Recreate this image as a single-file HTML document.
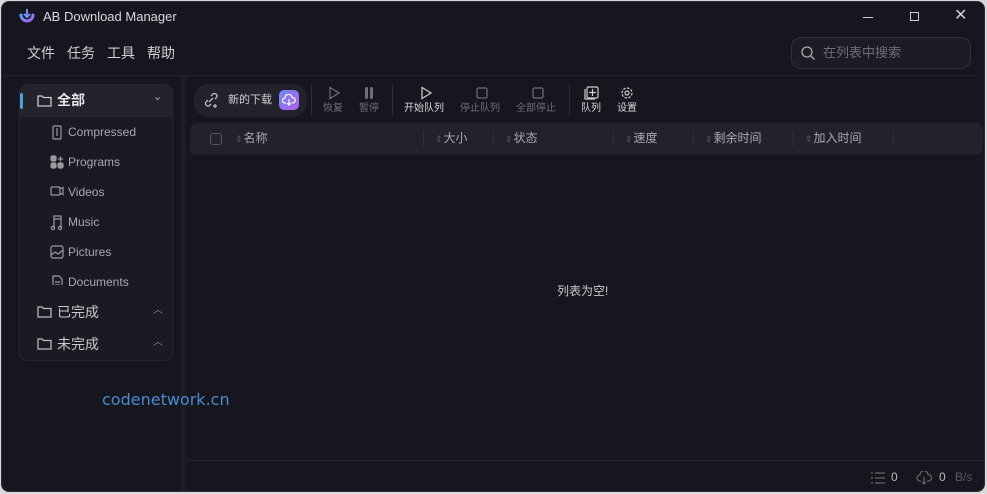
<!DOCTYPE html>
<html><head><meta charset="utf-8"><style>
*{margin:0;padding:0;box-sizing:border-box}
body{width:987px;height:494px;background:#d9d9d9;font-family:"Liberation Sans","Noto Sans CJK SC",sans-serif;overflow:hidden;position:relative}
.win{position:absolute;left:1px;top:1px;width:984px;height:491px;background:#16171e;border-radius:8px;border:1px solid #2a2b33;overflow:hidden}
.a{position:absolute;line-height:1.2}
.t{color:#d8d8dc;font-size:13px;white-space:nowrap}
.m{color:#d0d0d4;font-size:14px}
.side{left:17px;top:82px;width:154px;height:277px;background:#1a1b22;border:1px solid #26272f;border-radius:8px}
.si{color:#a8a8ae;font-size:12px}
svg{position:absolute}
.tb{font-size:10px;color:#6e6f76;text-align:center;white-space:nowrap}
.th{color:#a9a9b0;font-size:12px}
.ar{color:#55565d;font-size:9px;margin-right:1px}
.sep{width:1px;height:16px;background:#2f3038}
</style></head><body>
<div class="win">
<svg style="left:16px;top:6px" width="18" height="18" viewBox="0 0 18 18"><defs><linearGradient id="g" x1="0" y1="0" x2="1" y2="1"><stop offset="0" stop-color="#4aa8ff"/><stop offset="1" stop-color="#b05cf5"/></linearGradient></defs><path d="M3 7a6 6 0 1 0 12 0" stroke="url(#g)" stroke-width="3" fill="none" stroke-linecap="round"/><path d="M9 1v8M6 6l3 3 3-3" stroke="#7d8dff" stroke-width="2" fill="none"/></svg>
<div class="a t" style="left:41px;top:7px">AB Download Manager</div>
<div class="a" style="left:861px;top:15px;width:10px;height:1px;background:#ccc"></div>
<div class="a" style="left:908px;top:10px;width:9px;height:9px;border:1px solid #ccc"></div>
<div class="a" style="left:952px;top:4px;color:#ccc;font-size:16px">✕</div>
<div class="a m" style="left:25px;top:43px">文件</div>
<div class="a m" style="left:65px;top:43px">任务</div>
<div class="a m" style="left:105px;top:43px">工具</div>
<div class="a m" style="left:145px;top:43px">帮助</div>
<div class="a" style="left:789px;top:35px;width:180px;height:32px;border:1px solid #2e2f37;border-radius:10px;background:#1c1d24"></div>
<svg style="left:798px;top:43px" width="16" height="16" viewBox="0 0 16 16"><circle cx="7" cy="7" r="5" stroke="#aaa" stroke-width="1.3" fill="none"/><path d="M11 11l3.5 3.5" stroke="#aaa" stroke-width="1.3"/></svg>
<div class="a" style="left:821px;top:43px;color:#6d6e75;font-size:13px">在列表中搜索</div>
<div class="a" style="left:0;top:73px;width:975px;height:1px;background:#24252c"></div>
<div class="a" style="left:179px;top:74px;width:5px;height:420px;background:#1c1d24"></div>
<div class="a side"></div>
<div class="a" style="left:18px;top:83px;width:152px;height:32px;background:#22232b;border-radius:8px 8px 0 0"></div>
<div class="a" style="left:18px;top:91px;width:3px;height:16px;background:#4b9fd8;border-radius:2px"></div>
<svg style="left:35px;top:92px" width="15" height="13" viewBox="0 0 15 13"><path d="M1 2h4l1.5 1.5H14V12H1z" stroke="#ccc" stroke-width="1.3" fill="none"/></svg>
<div class="a" style="left:55px;top:90px;color:#e6e6ea;font-size:14px;font-weight:bold">全部</div>
<div class="a" style="left:151px;top:89px;color:#aaa;font-size:11px">⌄</div>
<div class="a si" style="left:66px;top:123px">Compressed</div>
<div class="a si" style="left:66px;top:153px">Programs</div>
<div class="a si" style="left:66px;top:183px">Videos</div>
<div class="a si" style="left:66px;top:213px">Music</div>
<div class="a si" style="left:66px;top:243px">Pictures</div>
<div class="a si" style="left:66px;top:273px">Documents</div>
<svg style="left:48px;top:123px" width="14" height="160" viewBox="0 0 14 160" fill="none" stroke="#9a9aa0" stroke-width="1.2">
<rect x="3" y="1" width="8" height="13" rx="1"/><path d="M7 3v8"/>
<rect x="1" y="31" width="5" height="5" rx="1.5" fill="#9a9aa0"/><rect x="1" y="38" width="5" height="5" rx="1.5" fill="#9a9aa0"/><rect x="8" y="38" width="5" height="5" rx="1.5" fill="#9a9aa0"/><path d="M8 34h5M10.5 31.5v5"/>
<rect x="1" y="62" width="9" height="8" rx="1"/><path d="M10 64l3-1.5v7L10 68"/>
<path d="M4 103V91h7v12M4 94h7"/><circle cx="3" cy="103" r="1.6"/><circle cx="10" cy="103" r="1.6"/>
<rect x="1" y="121" width="12" height="12" rx="2"/><path d="M1 130l4-3 3 2 5-4"/>
<path d="M3 151h6l3 3v10H3z M5 157h5M5 160h5"/>
</svg>
<svg style="left:35px;top:303px" width="15" height="45" viewBox="0 0 15 45"><path d="M1 2h4l1.5 1.5H14V12H1z M1 34h4l1.5 1.5H14V44H1z" stroke="#bbb" stroke-width="1.3" fill="none"/></svg>
<div class="a" style="left:55px;top:302px;color:#c8c8cc;font-size:14px">已完成</div>
<div class="a" style="left:55px;top:334px;color:#c8c8cc;font-size:14px">未完成</div>
<div class="a" style="left:151px;top:303px;color:#888;font-size:10px">︿</div>
<div class="a" style="left:151px;top:335px;color:#888;font-size:10px">︿</div>
<div class="a" style="left:100px;top:388px;color:#4a8ad0;font-size:16px;font-family:'DejaVu Sans',sans-serif">codenetwork.cn</div>
<div class="a" style="left:192px;top:82px;width:113px;height:33px;background:#21222a;border-radius:14px"></div>
<svg style="left:201px;top:90px" width="16" height="16" viewBox="0 0 16 16" fill="none" stroke="#bbb" stroke-width="1.3"><path d="M6 10l4-4M5 8L3 10a2.5 2.5 0 0 0 3.5 3.5L8 12M8 4l2-2a2.5 2.5 0 0 1 3.5 3.5L12 7M12 12v4M10 14h4"/></svg>
<div class="a" style="left:226px;top:92px;color:#d0d0d4;font-size:11px">新的下载</div>
<div class="a" style="left:277px;top:88px;width:20px;height:20px;border-radius:5px;background:linear-gradient(135deg,#6a8af5,#b45cf0)"></div>
<svg style="left:280px;top:92px" width="14" height="12" viewBox="0 0 14 12" fill="none" stroke="#fff" stroke-width="1.2"><path d="M4 9H3a2.5 2.5 0 0 1 0-5 3.5 3.5 0 0 1 7-.5A2.3 2.3 0 0 1 11 9h-1M7 5v6M5 9l2 2 2-2"/></svg>
<div class="a sep" style="left:309px;top:83px;height:30px"></div>
<div class="a sep" style="left:390px;top:83px;height:30px"></div>
<div class="a sep" style="left:567px;top:83px;height:30px"></div>
<svg style="left:326px;top:84px" width="320" height="14" viewBox="0 0 320 14" fill="none" stroke-width="1.2">
<path d="M2 1.5v11l9-5.5z" stroke="#6e6f76"/>
<rect x="37" y="1" width="3" height="12" rx="1.5" fill="#6e6f76"/><rect x="42" y="1" width="3" height="12" rx="1.5" fill="#6e6f76"/>
<path d="M94 1.5v11l9-5.5z" stroke="#ccc"/>
<rect x="149" y="2" width="10" height="10" rx="1.5" stroke="#6e6f76"/>
<rect x="205" y="2" width="10" height="10" rx="1.5" stroke="#6e6f76"/>
<rect x="259" y="1" width="11" height="11" rx="1.5" stroke="#ccc"/><path d="M264.5 3v7M261 6.5h7M257 3v10h10" stroke="#ccc"/>
<circle cx="299" cy="7" r="2" stroke="#ccc"/><circle cx="299" cy="7" r="5" stroke="#ccc" stroke-dasharray="2.5 1.4"/>
</svg>
<div class="a tb" style="left:321px;top:101px">恢复</div>
<div class="a tb" style="left:357px;top:101px">暂停</div>
<div class="a tb" style="left:402px;top:101px;color:#d4d4d8">开始队列</div>
<div class="a tb" style="left:458px;top:101px">停止队列</div>
<div class="a tb" style="left:514px;top:101px">全部停止</div>
<div class="a tb" style="left:579px;top:101px;color:#d4d4d8">队列</div>
<div class="a tb" style="left:615px;top:101px;color:#d4d4d8">设置</div>
<div class="a" style="left:188px;top:121px;width:793px;height:32px;background:#21222a;border-radius:7px"></div>
<div class="a" style="left:208px;top:131px;width:12px;height:12px;border:1px solid #55565d;border-radius:3px"></div>
<div class="a th" style="left:233px;top:129px"><span class="ar">⇕</span>名称</div>
<div class="a th" style="left:433px;top:129px"><span class="ar">⇕</span>大小</div>
<div class="a th" style="left:503px;top:129px"><span class="ar">⇕</span>状态</div>
<div class="a th" style="left:623px;top:129px"><span class="ar">⇕</span>速度</div>
<div class="a th" style="left:703px;top:129px"><span class="ar">⇕</span>剩余时间</div>
<div class="a th" style="left:803px;top:129px"><span class="ar">⇕</span>加入时间</div>
<div class="a sep" style="left:421px;top:129px"></div>
<div class="a sep" style="left:491px;top:129px"></div>
<div class="a sep" style="left:611px;top:129px"></div>
<div class="a sep" style="left:691px;top:129px"></div>
<div class="a sep" style="left:791px;top:129px"></div>
<div class="a sep" style="left:891px;top:129px"></div>
<div class="a" style="left:555px;top:282px;color:#c8c8cc;font-size:12px">列表为空!</div>
<div class="a" style="left:184px;top:458px;width:800px;height:1px;background:#26272e"></div>
<svg style="left:869px;top:470px" width="14" height="12" viewBox="0 0 14 12" stroke="#666" stroke-width="1.2"><path d="M0 1h2M4 1h10M0 6h2M4 6h10M0 11h2M4 11h10"/></svg>
<div class="a" style="left:889px;top:468px;color:#bbb;font-size:12px">0</div>
<svg style="left:914px;top:469px" width="16" height="14" viewBox="0 0 16 14" fill="none" stroke="#666" stroke-width="1.2"><path d="M5 10H4a3 3 0 0 1 0-6 4 4 0 0 1 8-.5A2.6 2.6 0 0 1 12.5 10H11M8 6v7M6 11l2 2 2-2"/></svg>
<div class="a" style="left:937px;top:468px;color:#bbb;font-size:12px">0</div>
<div class="a" style="left:953px;top:468px;color:#5a5b62;font-size:12px">B/s</div>
</div>
</body></html>
